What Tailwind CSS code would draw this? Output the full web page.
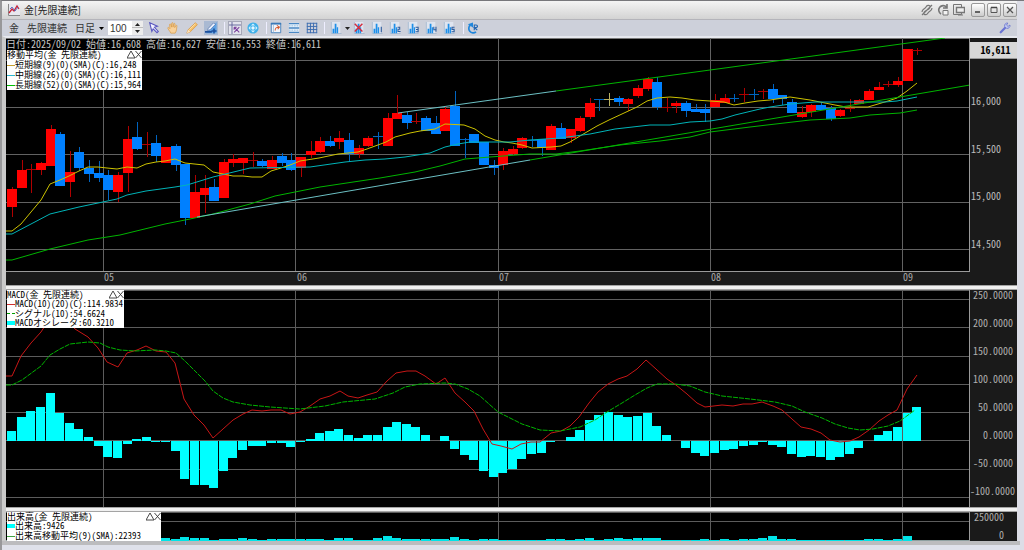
<!DOCTYPE html>
<html lang="ja">
<head>
<meta charset="utf-8">
<title>金[先限連続]</title>
<script src="https://cdn.jsdelivr.net/npm/@tailwindcss/browser@4"></script>
</head>
<body class="bg-[#dcdde6]">
<svg class="hidden" aria-hidden="true">
  <symbol id="bars" viewBox="0 0 14 14"><path d="M1 0h11v14H1z" fill="#dfe5f0"/><path d="M1.500 0v13.500H13.500" fill="none" stroke="#9fb4cc"/><path d="M3 13V8h2v5zM5.500 13V2h2v11zM8 13V6h1.500v7z" fill="#1e8fe8"/></symbol>
</svg>
<div class="flex h-screen flex-col border-t border-[#77777b] border-l-2 border-l-[#98989a] pr-[7px] font-['Noto_Sans_Mono_CJK_JP','Liberation_Sans','Noto_Sans_CJK_JP',sans-serif] text-[10px] leading-[10px]">
  <header class="flex h-[18px] shrink-0 items-center bg-linear-to-b from-[#f4f4f4] to-[#d3d3d3] pl-[6px] text-[#222]">
    <svg class="size-[12px]" viewBox="0 0 12 12"><path d="M0 0h12v12H0z" fill="#e8e8ee"/><path d="M.5 0v11.500H12" fill="none" stroke="#888"/><path d="M1 9l3-4 2 2 3-5 2 3" fill="none" stroke="#cc2233" stroke-width="1.300"/><path d="M2 5l2-2 3 4 3-4" fill="none" stroke="#4455bb" stroke-width=".8"/></svg>
    <h1 class="ml-1 flex-1 font-['Noto_Sans_CJK_JP',sans-serif] text-[10px]">金[先限連続]</h1>
    <div class="flex items-center gap-1">
      <button type="button" aria-label="リンク" class="size-3"><svg viewBox="0 0 12 12" fill="none" stroke="#777" stroke-width="1.200"><path d="M1 8c0-3 3-3 4-5s3-2 4-1-1 3-3 4M11 4c0 3-3 3-4 5s-3 2-4 1 1-3 3-4M1 11L11 1"/></svg></button>
      <button type="button" aria-label="更新" class="size-3"><svg viewBox="0 0 12 12" fill="none" stroke="#777" stroke-width="1.600"><path d="M9.500 3A4.500 4.500 0 1 0 4 10M10 0v4H6"/><path d="M6 6.500h5V11H6z" fill="#f2f2f2" stroke-width="1"/></svg></button>
      <button type="button" aria-label="複製" class="size-3"><svg viewBox="0 0 12 12" fill="none" stroke="#777"><path d="M.5 .5h8v10h-8z"/><path d="M3.500 3.500h8v5h-8z" fill="#eee" stroke-width="1.400"/><path d="M5 11h5"/></svg></button>
      <button type="button" aria-label="最小化" class="ml-[2px] flex h-[14px] w-[14px] items-center justify-center rounded-[2px] border border-[#999] bg-linear-to-b from-[#fff] to-[#ccc]"><svg class="size-2" viewBox="0 0 8 8"><path d="M1 6h5" stroke="#444" stroke-width="1.600"/></svg></button>
      <button type="button" aria-label="最大化" class="-ml-[2px] flex h-[14px] w-[14px] items-center justify-center rounded-[2px] border border-[#999] bg-linear-to-b from-[#fff] to-[#ccc]"><svg class="size-2" viewBox="0 0 8 8"><path d="M1 1.500h6v5H1z" fill="none" stroke="#555"/><path d="M1 1.500h6" stroke="#444" stroke-width="1.500"/></svg></button>
      <button type="button" aria-label="閉じる" class="-ml-[2px] flex h-[14px] w-[14px] items-center justify-center rounded-[2px] border border-[#999] bg-linear-to-b from-[#fff] to-[#ccc]"><svg class="size-2" viewBox="0 0 8 8"><path d="M1 1l6 6M7 1L1 7" stroke="#555" stroke-width="1.300"/></svg></button>
    </div>
  </header>
  <div class="flex h-[17px] shrink-0 items-center border-t border-[#b4b4ba] bg-[#cdd0da] pl-[7px] text-[#333]">
    <span>金</span><span class="ml-2">先限連続</span>
    <button type="button" class="ml-2 flex items-center gap-1 text-[10px]">日足<svg class="h-[3px] w-[5px]" viewBox="0 0 5 3"><path d="M0 0h5L2.500 3z"/></svg></button>
    <label class="flex items-center"><span class="sr-only">本数</span><input value="100" class="ml-[4px] h-[14px] w-[24px] bg-white pl-[2px] font-['Liberation_Sans',sans-serif] text-[10px] leading-3 outline-none"></label>
    <div class="flex h-[14px] w-[11px] flex-col bg-[#ececec]">
      <button type="button" aria-label="増やす" class="flex h-[7px] items-center justify-center border-b border-[#bbb]"><svg class="h-[3px] w-[5px]" viewBox="0 0 5 3"><path d="M0 3h5L2.500 0z" fill="#222"/></svg></button>
      <button type="button" aria-label="減らす" class="flex h-[7px] items-center justify-center"><svg class="h-[3px] w-[5px]" viewBox="0 0 5 3"><path d="M0 0h5L2.500 3z" fill="#222"/></svg></button>
    </div>
    <div class="ml-1 flex gap-[5px]">
      <button type="button" aria-label="選択" class="size-[14px] p-px"><svg viewBox="0 0 14 14"><path d="M2 1l9 4-3.500 1.200L12 11l-1.500 1.500L6 8 4.500 11z" fill="#f4f4ff" stroke="#5a58c0" stroke-width="1.300"/></svg></button>
      <button type="button" aria-label="移動" class="size-[14px] p-px"><svg viewBox="0 0 14 14"><path d="M4.500 13C3 10 1 8.500 1 7s1.500-.5 2.500.8L3 3c0-1 1.300-1 1.500 0l.7 3L5.500 1.500c.1-1 1.400-1 1.500 0V6l1-3.800c.3-1 1.500-.7 1.400.3L9 6.500l1.300-2.200c.6-.8 1.600-.3 1.300.6C11 8 11.500 10 9.500 13z" fill="#f8d19a" stroke="#d89a45" stroke-width=".8"/></svg></button>
      <button type="button" aria-label="鉛筆" class="size-[14px] p-px"><svg viewBox="0 0 14 14"><path d="M1 13l1.500-4L11 .8l2.200 2.400L5 11.500z" fill="#f6c069" stroke="#d8933a" stroke-width=".8"/><path d="M1 13l1.500-4L5 11.500z" fill="#fbe3c0"/><path d="M4 9l7-7" stroke="#fde6b4"/></svg></button>
      <button type="button" aria-label="描画" aria-pressed="true" class="size-[14px] bg-[#a9b9d2] p-px"><svg viewBox="0 0 14 14"><path d="M13.500 0v13H1z" fill="#5da2e4"/><path d="M3 10l.8-2.500L10 1l2 2-6 6z" fill="#eef4ff" stroke="#4a6ca8" stroke-width=".8"/><path d="M0 11.500h8M10.500 7.500v6M7.500 10.500h6" stroke="#1c4f9c" stroke-width="1.800"/></svg></button>
    </div>
    <span class="ml-[6px] h-3 w-px bg-[#eef]"></span>
    <div class="ml-[3px] flex gap-1">
      <button type="button" aria-label="十字線" aria-pressed="true" class="size-[14px] border border-[#a6a8b8] bg-[#e2e3ec]"><svg viewBox="0 0 14 14"><path d="M3.500 0v14M0 3.500h14" stroke="#5a5c96"/><path d="M6 6l6 6M6 12l6-6M6 6v3M6 6h3" fill="none" stroke="#7a3f9c" stroke-width="1.200"/></svg></button>
      <button type="button" aria-label="切替" class="size-[14px] p-px"><svg viewBox="0 0 14 14"><circle cx="7" cy="7" r="6.500" fill="#3fb0ea"/><path d="M7 1.800L9.500 4h-5zM7 12.200L4.500 10h5zM1.800 7L4 4.500v5zM12.200 7L10 9.500v-5z" fill="#d8f3ff"/><circle cx="7" cy="7" r="2" fill="#e9f8ff"/></svg></button>
    </div>
    <span class="ml-[6px] h-3 w-px bg-[#eef]"></span>
    <div class="ml-[2px] flex gap-1">
      <button type="button" aria-label="別画面" class="size-[14px] p-px"><svg viewBox="0 0 14 14"><path d="M1.500 1.500h11v11h-11z" fill="#f3f6fc" stroke="#3b79b8"/><path d="M1 1h12v2H1z" fill="#3b79b8"/><path d="M4 3v9" stroke="#9bbbd9"/><path d="M6 10c0-3 1-4 4-4M8 4l3 2-2 2.500" fill="none" stroke="#d8582c" stroke-width="1.200"/></svg></button>
      <button type="button" aria-label="横分割" class="size-[14px] p-px"><svg viewBox="0 0 14 14"><path d="M1 1h12v12H1z" fill="#eaf3fc"/><path d="M1 2h12M1 7h12M1 12h12" stroke="#4a88c4" stroke-width="1.500"/><path d="M1 4.500h12M1 9.500h12" stroke="#86b4dc" stroke-dasharray="2 1"/></svg></button>
      <button type="button" aria-label="格子" class="size-[14px] p-px"><svg viewBox="0 0 14 14"><path d="M1 1.500h12M1 5.200h12M1 8.800h12M1 12.500h12M1.500 1v12M5.200 1v12M8.800 1v12M12.500 1v12" fill="none" stroke="#3d6cb0" stroke-width="1.100"/></svg></button>
    </div>
    <span class="ml-[5px] h-3 w-px bg-[#eef]"></span>
    <div class="ml-1 flex items-center">
      <button type="button" aria-label="チャート種類" class="flex items-center gap-[2px]"><svg class="size-[14px] p-px"><use href="#bars"/></svg><svg class="h-[3px] w-[5px]" viewBox="0 0 5 3"><path d="M0 0h5L2.500 3z" fill="#222"/></svg></button>
      <button type="button" aria-label="削除" class="ml-[2px] size-[14px] p-px"><svg viewBox="0 0 14 14"><use href="#bars"/><path d="M2 2l9 9M11 2l-9 9" stroke="#d32e3e" stroke-width="1.700"/></svg></button>
      <div class="ml-1 flex gap-1">
        <button type="button" aria-label="設定1" class="size-[14px] p-px"><svg viewBox="0 0 14 14"><use href="#bars"/><path d="M12 5.500V12" stroke="#2a5a9c" stroke-width="1.300"/></svg></button>
        <button type="button" aria-label="設定2" class="size-[14px] p-px"><svg viewBox="0 0 14 14"><use href="#bars"/><path d="M10 6h2.500v2.500h-2v2.500h3" fill="none" stroke="#2a5a9c" stroke-width="1.200"/></svg></button>
        <button type="button" aria-label="設定3" class="size-[14px] p-px"><svg viewBox="0 0 14 14"><use href="#bars"/><path d="M10 6h3v5.500h-3M10.500 8.700H13" fill="none" stroke="#2a5a9c" stroke-width="1.200"/></svg></button>
        <button type="button" aria-label="設定4" class="size-[14px] p-px"><svg viewBox="0 0 14 14"><use href="#bars"/><path d="M10.300 5.500V9h3.200M12.800 5.500v6" fill="none" stroke="#2a5a9c" stroke-width="1.200"/></svg></button>
        <button type="button" aria-label="設定5" class="size-[14px] p-px"><svg viewBox="0 0 14 14"><use href="#bars"/><path d="M13.500 6h-3v2.600H13v2.800h-3" fill="none" stroke="#2a5a9c" stroke-width="1.200"/></svg></button>
      </div>
    </div>
    <span class="ml-[7px] h-3 w-px bg-[#eef]"></span>
    <button type="button" aria-label="リセット" class="ml-[2px] size-[14px] p-px"><svg viewBox="0 0 14 14" fill="none" stroke="#1f86dc" stroke-width="2"><path d="M4 3.500A5 5 0 1 0 10.500 11.500"/><path d="M1 2.500L7 .5v6z" fill="#1f86dc" stroke="none"/><path d="M8.500 9.500V3.500h2.200a1.400 1.400 0 0 1 0 3H8.500L12 9.500" stroke="#2468b4" stroke-width="1.400"/></svg></button>
    <button type="button" aria-label="設定" class="mr-[5px] ml-auto size-[14px] p-px"><svg viewBox="0 0 14 14"><path d="M2 12l5.500-5.500" stroke="#6a74d4" stroke-width="2.600" stroke-linecap="round"/><path d="M12.800 3.500L10.500 5.200 8.800 3.600 10.300 1.200C8 .8 6 2.800 6.600 5.200L8.800 7.400C11.200 8 13.400 5.800 12.800 3.500z" fill="#c4cdf4" stroke="#6670cc" stroke-width=".9"/></svg></button>
  </div>
  <main class="flex min-h-0 flex-1 flex-col border-t-2 border-l-4 border-t-[#e6e8ee] border-l-[#c9c9c9]">
    <section aria-label="価格チャート" class="flex min-h-0 flex-1 flex-col bg-[#1a1a1a]">
      <div class="flex min-h-0 flex-1">
        <div class="relative min-w-0 flex-1 border-r border-b border-[#9a9a9a] bg-black">
          <svg id="price" class="block h-full w-full" viewBox="6 38 963 233" preserveAspectRatio="none">
            <path d="M6 38.500H969" stroke="#777"/>
            <path d="M6 60.500H969M6 107.500H969M6 154.500H969M6 202.500H969M6 249.500H969M103.500 38V272M295.500 38V272M498.500 38V272M710.500 38V272M902.500 38V272" stroke="#626262"/>
            <g id="candles"></g>
            <g fill="none">
              <polyline stroke="#ccc200" points="6,231 12,231 21,224 31,212 41,200 50,184 60,180 69,176 79,171 88,167 98,167 107,168 117,169 127,167 137,168 146,164 156,162 165,161 175,159 185,163 204,165 213,172 223,174 233,176 243,176 252,177 262,177 271,171 281,168 290,165 300,161 319,158 338,154 358,152 367,149 386,142 395,137 410,133 420,131 435,129 445,124 464,125 475,129 485,136 495,140 504,142 512,143 522,145 532,148 551,147 561,146 570,142 580,136 597,126 609,120 637,107 647,101 657,98 670,97 682,98 695,100 710,101 724,102 734,105 745,103 758,101 770,100 790,97 810,100 820,102 835,105 846,107 868,107 878,104 888,101 897,98 907,91 917,83"/>
              <polyline stroke="#00b4b8" points="6,234 12,234 50,214 79,207 117,199 127,195 146,191 175,187 187,185 213,177 250,168 310,167 345,162 365,160 385,159 405,157 430,153 445,147 458,144 470,142 510,142 530,140 560,138 590,134 615,129 650,125 670,125 690,122 710,121 722,119 735,115 760,109 770,107 790,104 815,102 885,102 897,101 907,99 917,97"/>
              <polyline stroke="#00b400" points="6,260 12,260 50,249 88,240 120,235 165,224 190,219 213,214 235,208 250,204 275,196 320,187 380,178 415,172 440,166 465,159 490,157 530,154 556,154 580,151 620,145 660,141 690,137 710,132 750,127 810,120 850,118 870,115 900,113 917,110"/>
              <path stroke="#6cc0c4" d="M197 217L530 160M398 113L556 91"/>
              <path stroke="#00b400" d="M530 160L970 85M556 91L945 38"/>
            </g>
          </svg>
          <p class="absolute top-px left-0 whitespace-pre text-[#c8c8c8]">日付:2025/09/02 始値:16,608 高値:16,627 安値:16,553 終値:16,611</p>
          <div class="absolute top-[12px] left-px w-[135px] bg-white text-[9px] whitespace-nowrap text-black">
            <div class="flex justify-between"><span>移動平均(金 先限連続)</span><svg class="h-[9px] w-[15px]" viewBox="0 0 15 9" fill="none" stroke="#333" stroke-width=".9"><path d="M0 8h8L4 1zM8.500 1l6 7M14.500 1l-6 7"/></svg></div>
            <div class="flex items-center"><i class="h-px w-2 shrink-0 bg-[#c8a030]"></i>短期線(9)(0)(SMA)(C):16,248</div>
            <div class="flex items-center"><i class="h-px w-2 shrink-0 bg-[#30b8d0]"></i>中期線(26)(0)(SMA)(C):16,111</div>
            <div class="flex items-center"><i class="h-px w-2 shrink-0 bg-[#00c000]"></i>長期線(52)(0)(SMA)(C):15,964</div>
          </div>
        </div>
        <div class="flex w-[47px] shrink-0 flex-col text-[#bdbdbd]">
          <div class="mt-1 flex h-[17px] items-center justify-center border-b border-[#999] bg-[#d8d8d8] pl-1 font-bold text-black">16,611</div>
          <div class="mt-[37px] mb-[23px] flex flex-1 flex-col justify-between pl-px"><span>16,000</span><span>15,500</span><span>15,000</span><span>14,500</span></div>
        </div>
      </div>
      <div class="grid h-[13px] shrink-0 grid-cols-[97px_193fr_202fr_212fr_192fr_115fr] text-[#aaa]"><span></span><span class="pl-px">05</span><span class="pl-px">06</span><span class="pl-px">07</span><span class="pl-px">08</span><span class="pl-px">09</span></div>
    </section>
    <div class="h-[5px] shrink-0 border-y border-[#a4a4a4] bg-[#f0f0f0]"></div>
    <section aria-label="MACD" class="flex h-[217px] shrink-0 bg-[#1a1a1a]">
      <div class="relative min-w-0 flex-1 border-r border-[#9a9a9a] bg-black">
        <svg class="block h-full w-full" viewBox="6 290 963 217" preserveAspectRatio="none">
          <path d="M6 290.500H969M6 299.500H969M6 327.500H969M6 356.500H969M6 384.500H969M6 412.500H969M6 440.500H969M6 469.500H969M6 497.500H969M103.500 290V507M295.500 290V507M498.500 290V507M710.500 290V507M902.500 290V507" stroke="#5c5c5c"/>
          <g id="osc" fill="#00ffff"></g>
          <g fill="none">
            <polyline stroke="#c81616" points="6,376 12,376 21,356 31,343 41,332 50,318 60,312 75,329 88,337 98,348 107,362 118,367 127,353 137,350 146,346 156,351 166,352 175,363 184,399 194,415 204,425 213,438 223,429 233,420 243,414 252,410 262,411 271,410 281,410 290,414 300,412 310,406 320,399 330,396 340,391 348,396 358,398 367,395 377,392 387,381 396,373 407,371 416,371 425,376 436,384 445,378 455,393 465,402 474,411 483,429 492,444 501,446 512,449 521,444 531,442 540,442 551,433 561,431 570,426 579,417 589,403 598,392 608,384 618,379 627,376 637,369 646,360 656,369 667,379 676,385 687,394 697,403 705,407 722,405 733,406 743,404 752,404 762,402 773,406 782,410 792,419 801,427 811,429 821,433 830,440 840,442 850,441 859,437 869,430 879,421 888,415 897,410 907,389 917,375"/>
            <polyline stroke="#00b400" stroke-dasharray="5 1" points="6,385 12,385 22,380 41,366 50,355 60,349 70,344 88,342 100,343 108,347 120,350 135,351 155,350 166,351 176,353 185,361 195,371 205,381 213,391 223,398 233,402 250,405 270,407 300,409 325,406 343,402 375,399 393,393 405,387 420,384 445,383 455,384 468,389 480,396 498,412 510,418 522,424 540,430 560,431 580,427 595,420 607,412 622,403 635,395 647,388 657,384 675,384 690,386 705,392 722,396 750,399 775,402 792,406 805,412 822,418 835,424 848,428 860,430 873,429 888,426 900,421 915,410"/>
          </g>
        </svg>
        <div class="absolute top-0 left-px w-[117px] bg-white pb-px text-[9px] leading-[9px] whitespace-nowrap text-black">
          <div class="flex justify-between"><span>MACD(金 先限連続)</span><svg class="h-[9px] w-[15px]" viewBox="0 0 15 9" fill="none" stroke="#333" stroke-width=".9"><path d="M0 8h8L4 1zM8.500 1l6 7M14.500 1l-6 7"/></svg></div>
          <div class="flex items-center leading-[10px]"><i class="h-px w-2 shrink-0 bg-[#d03030]"></i>MACD(10)(20)(C):114.9834</div>
          <div class="flex items-center leading-[9px]"><i class="w-2 shrink-0 border-t border-dashed border-[#00a000]"></i>シグナル(10):54.6624</div>
          <div class="flex items-center leading-[9px]"><i class="h-1 w-2 shrink-0 bg-[#00ffff]"></i>MACDオシレータ:60.3210</div>
        </div>
      </div>
      <div class="flex w-[47px] shrink-0 flex-col justify-between pr-1 pb-[11px] text-right text-[#b0b0b0]"><span>250.0000</span><span>200.0000</span><span>150.0000</span><span>100.0000</span><span>50.0000</span><span>0.0000</span><span>-50.0000</span><span>-100.0000</span></div>
    </section>
    <div class="h-[5px] shrink-0 border-y border-[#a4a4a4] bg-[#f0f0f0]"></div>
    <section aria-label="出来高" class="flex h-[29px] shrink-0 bg-[#1a1a1a]">
      <div class="relative min-w-0 flex-1 border-r border-[#9a9a9a] bg-black">
        <svg class="block h-full w-full" viewBox="6 512 963 29" preserveAspectRatio="none">
          <path d="M6 512.500H969M6 521.500H969M103.500 512V541M295.500 512V541M498.500 512V541M710.500 512V541M902.500 512V541" stroke="#5c5c5c"/>
          <path d="M6 540.500H969" stroke="#8fa0a0"/>
          <g id="vol" fill="#00e4e8"></g>
        </svg>
        <div class="absolute top-0 left-px w-[154px] bg-white text-[9px] leading-[9px] whitespace-nowrap text-black">
          <div class="flex justify-between"><span>出来高(金 先限連続)</span><svg class="h-[9px] w-[15px]" viewBox="0 0 15 9" fill="none" stroke="#333" stroke-width=".9"><path d="M0 8h8L4 1zM8.500 1l6 7M14.500 1l-6 7"/></svg></div>
          <div class="flex items-center leading-[10px]"><i class="h-1 w-2 shrink-0 bg-[#00ffff]"></i>出来高:9426</div>
          <div class="flex items-center leading-[10px]"><i class="h-px w-2 shrink-0 bg-[#40a040]"></i>出来高移動平均(9)(SMA):22393</div>
        </div>
      </div>
      <div class="flex w-[47px] shrink-0 flex-col justify-between pr-[13px] pb-px text-right text-[#b0b0b0]"><span>250000</span><span>0</span></div>
    </section>
  </main>
  <footer class="-mr-[3px] h-[9px] shrink-0 border-t-4 border-[#bcbcbe] bg-[#dfe1ea]"></footer>
</div>
<script>
const X0 = 12, STEP = 9.63, NS = 'http://www.w3.org/2000/svg';
// kind, body top, body bottom, wick high, wick low
const candles = `R189,206,187,217 R170,187,160,187 R169,170,164,193 R163,169,162,175 R129,165,125,165 B134,185,132,185 R172,181,151,197 B152,167,147,171 B168,173,160,182 B173,177,161,182
B175,189,170,200 R175,191,172,202 R139,172,126,192 B137,148,122,150 R144,145,132,157 B143,155,135,162 R147,162,147,163 B146,164,144,171 B164,217,164,225 R192,217,175,217
R188,194,175,213 B187,200,179,201 R162,197,159,197 R159,162,154,167 R158,162,158,174 R160,161,152,167 B161,165,159,167 R160,168,156,169 B156,162,153,166 B160,169,153,171
R157,167,157,177 R151,154,141,158 R141,151,137,153 B141,145,136,147 R138,141,131,149 B140,153,133,162 R148,153,145,158 R138,145,136,147 B136,137,132,149 R118,145,113,145
R113,118,95,118 B115,122,112,129 R121,122,113,124 B118,130,116,131 B123,133,116,133 R109,130,107,130 B106,145,91,145 B139,140,138,158 B134,142,134,142 B142,164,142,164
B165,167,160,175 R151,164,148,170 R149,153,146,155 R138,147,137,149 B140,141,136,147 B139,147,139,156 R126,149,124,149 B128,138,123,138 R129,137,129,143 R118,130,116,132
R103,116,98,119 B99,100,99,111 Y99,100,93,106 B98,101,96,106 R99,103,98,111 R88,95,85,98 R79,88,77,91 B82,106,77,110 R107,108,98,112 R103,105,101,113
B103,110,101,117 B109,111,104,111 B109,112,104,122 R100,106,94,106 R98,102,94,102 B98,99,94,102 R94,95,88,102 B94,95,89,100 R91,92,89,99 B89,98,84,103
B95,98,95,105 B102,112,99,113 R112,116,106,118 R105,111,104,117 B105,109,102,109 B108,118,106,121 R110,115,109,117 R108,109,99,112 R100,103,99,104 R91,99,89,100
R87,89,82,89 R84,85,81,87 R81,84,77,87 R49,80,49,81 R50,51,48,55`.split(/\s+/);
const osc = [431,417,411,407,393,413,423,429,437,446,457,458,444,439,437,442,442,451,479,485,485,488,471,458,450,446,446,443,443,447,442,439,433,431,429,435,438,435,435,427,422,424,427,435,441,436,449,455,460,471,477,473,469,459,454,453,442,441,437,430,420,415,412,415,417,416,413,426,435,441,448,453,456,453,450,449,446,445,442,445,447,454,457,456,457,460,457,454,448,441,435,431,427,413,407];
const vol = [2,2,2,2,3,2,2,2,2,2,2,2,2,2,2,2,3,2,4,3,3,1,2,2,3,2,1,2,2,2,2,2,2,1,3,3,1,1,3,5,3,2,2,2,2,2,4,2,1,2,2,1,1,1,1,1,2,2,1,2,3,1,2,3,2,3,3,3,1,1,1,1,2,1,2,1,2,2,3,5,2,2,1,1,1,1,1,1,1,2,2,1,2,5,0];
const colors = { R: '#ff0000', B: '#0080ff', Y: '#d8d070' };
const wicks = { R: '#b00000', B: '#0064c0', Y: '#b8b060' };
function rect(parent, x, y, w, h, fill) {
  const r = document.createElementNS(NS, 'rect');
  r.setAttribute('x', x); r.setAttribute('y', y); r.setAttribute('width', w); r.setAttribute('height', h);
  if (fill) r.setAttribute('fill', fill);
  parent.append(r);
}
const [gc, go, gv] = ['candles', 'osc', 'vol'].map(id => document.getElementById(id));
candles.forEach((c, i) => {
  const k = c[0], [t, b, hi, lo] = c.slice(1).split(',').map(Number), x = Math.round(X0 + i * STEP);
  rect(gc, x, hi, 1, Math.max(1, lo - hi), wicks[k]);
  rect(gc, x - 5, t, 10, b - t + (b - t > 1 ? 1 : 0), b - t > 1 ? colors[k] : wicks[k]);
});
osc.forEach((y, i) => {
  const x = Math.round(X0 + i * STEP) - 5;
  if (y !== 441) rect(go, x, Math.min(y, 441), 9, Math.abs(y - 441));
});
vol.forEach((v, i) => rect(gv, Math.round(X0 + i * STEP) - 5, 541 - v, 9, v));
</script>
</body>
</html>
